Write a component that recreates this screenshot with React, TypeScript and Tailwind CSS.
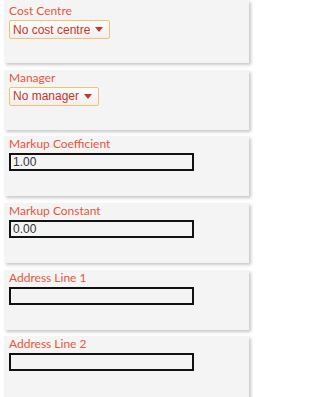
const selects = [
  { label: "Cost Centre", value: "No cost centre" },
  { label: "Manager", value: "No manager" },
];

const inputs = [
  { label: "Markup Coefficient", value: "1.00" },
  { label: "Markup Constant", value: "0.00" },
  { label: "Address Line 1", value: "" },
  { label: "Address Line 2", value: "" },
];

function Card({ label, children }: { label: string; children: React.ReactNode }) {
  return (
    <div className="h-[60px] w-[245px] shrink-0 bg-[#f4f4f4] pl-[5px] shadow-[2px_2px_3px_rgba(0,0,0,0.22)] first:h-[63px] first:pt-[3px] last:h-[80px]">
      <div className="text-[12px] leading-[16px] text-[#e6563b] [font-family:Lato,'Liberation_Sans',sans-serif]">
        {label}
      </div>
      <div className="mt-[1px]">{children}</div>
    </div>
  );
}

function Dropdown({ value }: { value: string }) {
  return (
    <button className="flex h-[19px] items-center gap-[5px] rounded-[2px] border border-[#f3c26e] bg-gradient-to-b from-[#fdfdfd] to-[#efefef] pl-[3px] pr-[6px] text-[12px] leading-none text-[#c8352a] [font-family:'Liberation_Sans',Arial,sans-serif]">
      {value}
      <svg width="8" height="5" viewBox="0 0 8 5">
        <path d="M0 0h8L4 5z" fill="#c8352a" />
      </svg>
    </button>
  );
}

export default function App() {
  return (
    <div className="h-[397px] w-[259px] overflow-hidden bg-white">
      <div className="ml-[4px] flex flex-col gap-[6.7px]">
        {selects.map((s) => (
          <Card key={s.label} label={s.label}>
            <Dropdown value={s.value} />
          </Card>
        ))}
        {inputs.map((f) => (
          <Card key={f.label} label={f.label}>
            <input
              readOnly
              value={f.value}
              className="block h-[18px] w-[185px] border-2 border-[#111] bg-transparent px-[2px] text-[12px] text-[#333] outline-none [font-family:'Liberation_Sans',Arial,sans-serif]"
            />
          </Card>
        ))}
      </div>
    </div>
  );
}
